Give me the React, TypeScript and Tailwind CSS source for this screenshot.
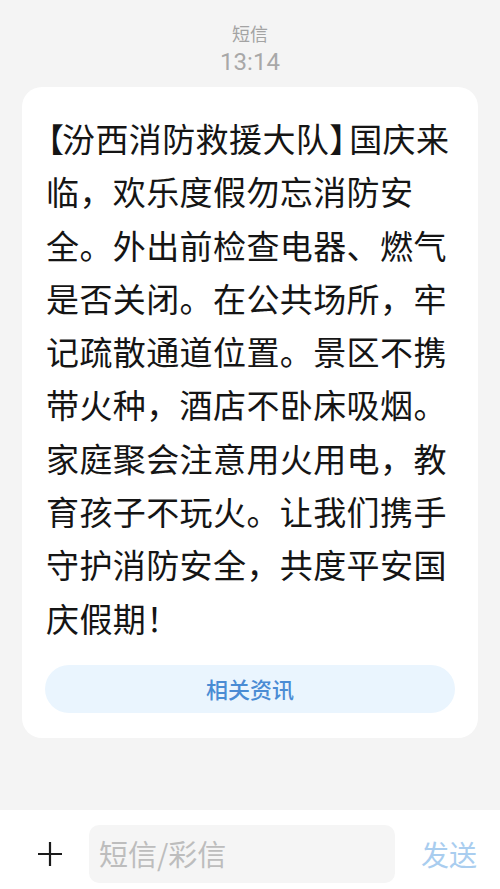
import React from "react";

const lines: React.ReactNode[] = [
  <>
    <span className="inline-block -ml-[15px] tracking-[-2px]">【</span>汾西消防救援大队<span className="inline-block tracking-[-13px]">】</span>国庆来
  </>,
  "临，欢乐度假勿忘消防安",
  "全。外出前检查电器、燃气",
  "是否关闭。在公共场所，牢",
  "记疏散通道位置。景区不携",
  "带火种，酒店不卧床吸烟。",
  "家庭聚会注意用火用电，教",
  "育孩子不玩火。让我们携手",
  "守护消防安全，共度平安国",
  "庆假期！",
];

export default function App() {
  return (
    <div
      className="w-[500px] h-[889px] bg-[#f4f4f4] flex flex-col overflow-hidden"
      style={{ fontFamily: '"Noto Sans CJK SC", "Noto Sans", Roboto, sans-serif' }}
    >
      <div className="pt-[21px] flex flex-col items-center">
        <div className="text-[18px] leading-[24px] text-[#a3a3a3]">短信</div>
        <div className="mt-[3px] text-[24px] leading-[28px] text-[#a8a8a8]" style={{ fontFamily: "Roboto, sans-serif" }}>
          13:14
        </div>
      </div>

      <div className="mt-[11px] mx-[22px] bg-white rounded-[20px] pt-[25px] pb-[25px]">
        <div className="px-[24px] text-[33px] leading-[53.3px] tracking-[0.4px] text-[#151515] whitespace-nowrap">
          {lines.map((l, i) => (
            <div key={i}>{l}</div>
          ))}
        </div>
        <div className="mx-[23px] mt-[20px] h-[48px] rounded-full bg-[#eaf5fe] flex items-center justify-center">
          <span className="text-[22px] font-medium text-[#4a8cd4]">相关资讯</span>
        </div>
      </div>

      <div className="flex-1" />

      <div className="h-[79px] bg-white flex items-start pt-[15px]">
        <div className="w-[89px] h-[58px] flex items-center justify-center">
          <svg width="26" height="26" viewBox="0 0 26 26" className="ml-[10px]">
            <path d="M13 1 V25 M1 13 H25" stroke="#1a1a1a" strokeWidth="2.2" />
          </svg>
        </div>
        <div className="w-[306px] h-[58px] rounded-[10px] bg-[#f5f5f5] flex items-center pl-[10px]">
          <span className="text-[29px] text-[#bdbdbd]">短信/彩信</span>
        </div>
        <div className="flex-1 h-[58px] flex items-center justify-center pl-[3px]">
          <span className="text-[28px] text-[#a9cdef]">发送</span>
        </div>
      </div>
    </div>
  );
}
